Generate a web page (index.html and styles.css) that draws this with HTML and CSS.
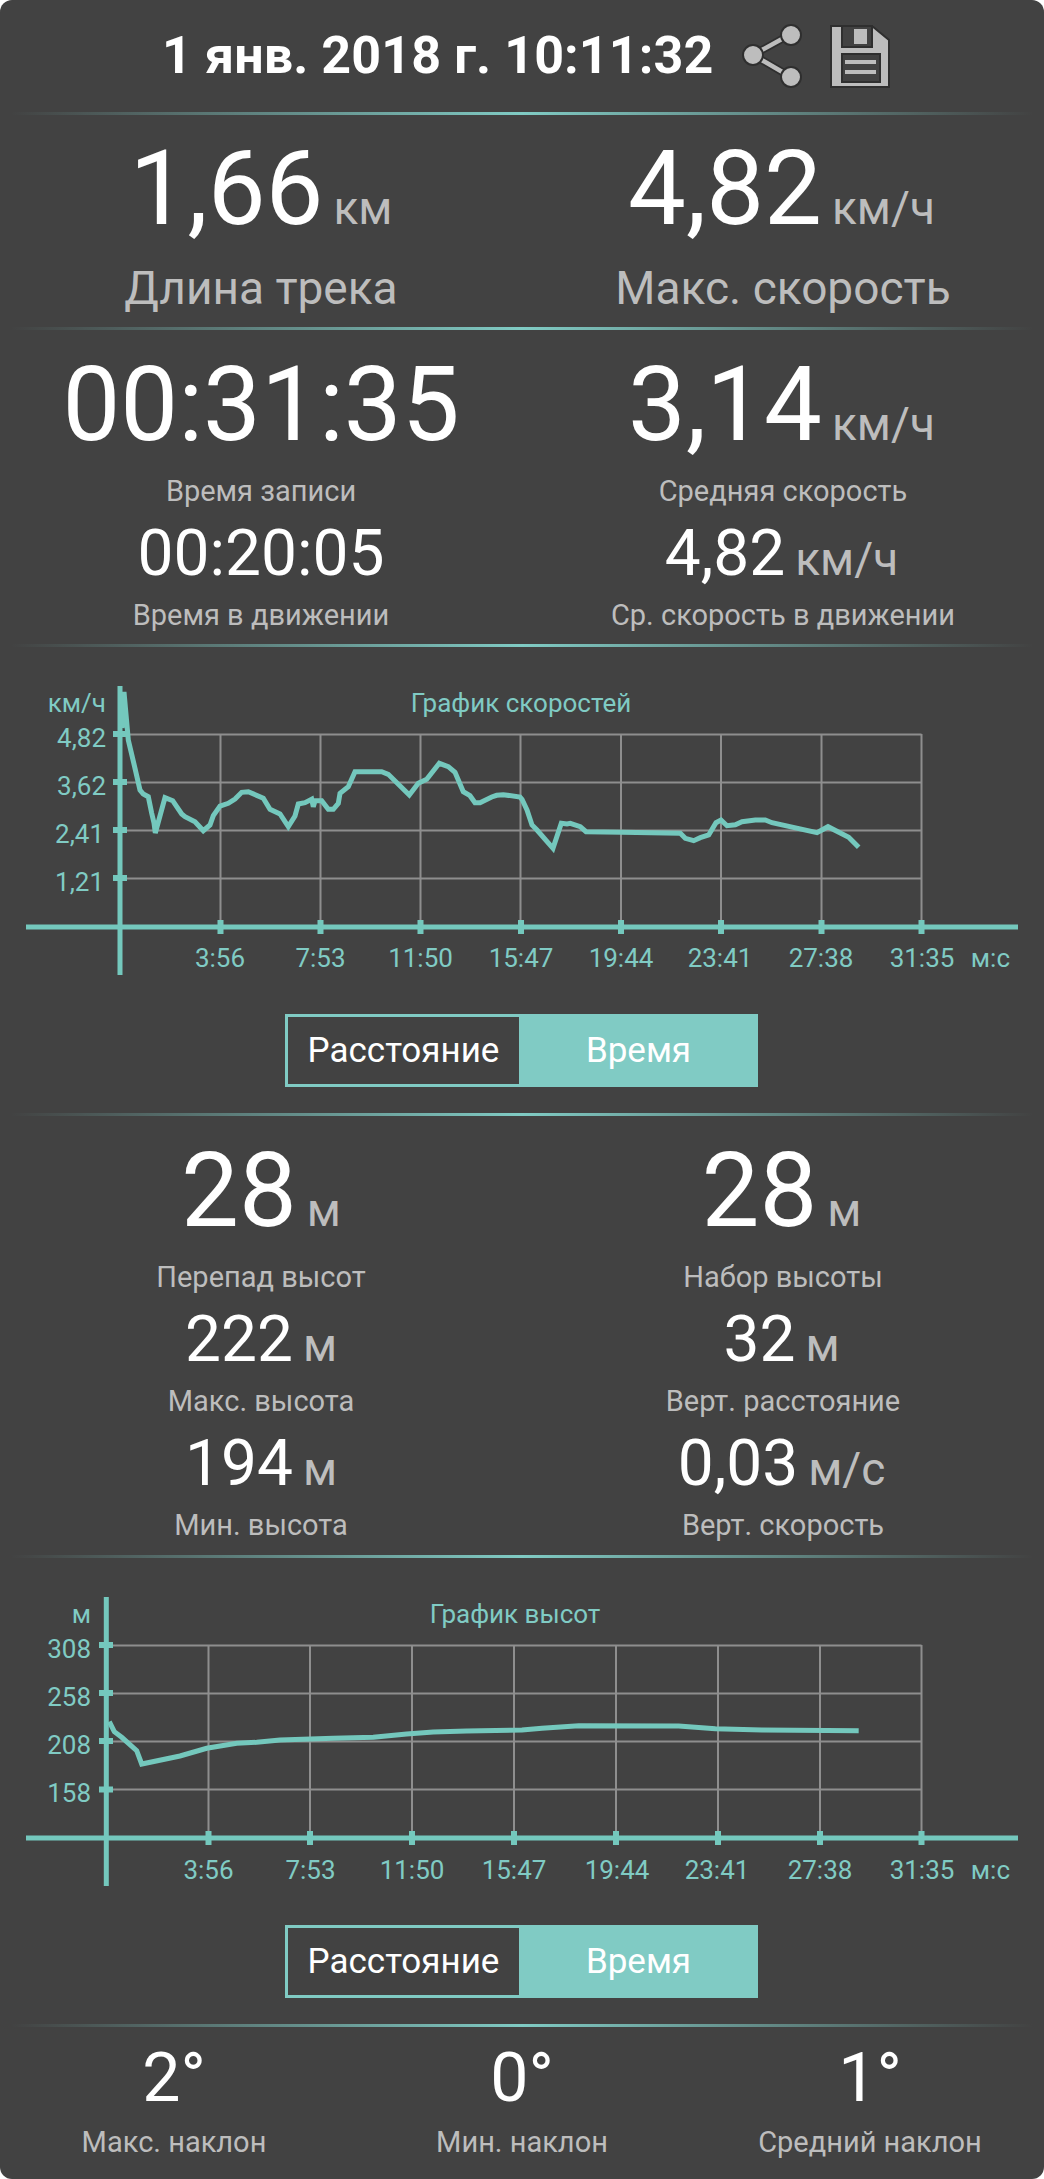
FILE: index.html
```html
<!DOCTYPE html>
<html lang="ru">
<head>
<meta charset="utf-8">
<title>Трек</title>
<link rel="stylesheet" href="styles.css">
</head>
<body>
<main class="screen">
  <header class="head">
    <h1 class="title">1 янв. 2018 г. 10:11:32</h1>
    <svg class="icon share" viewBox="0 0 60 64" aria-hidden="true">
      <path class="share-arm" d="M11 31 L49 10 M11 31 L49 53"/>
      <path class="share-fill" d="M11 31 L49 10 M11 31 L49 53"/>
      <circle cx="11" cy="31" r="10"/><circle cx="49" cy="11" r="10"/><circle cx="49" cy="53" r="10"/>
    </svg>
    <svg class="icon disk" viewBox="0 0 60 63" aria-hidden="true">
      <path class="disk-body" fill-rule="evenodd" d="M1 1 H42 L59 15 V62 H1 Z M12 1 V22 H42 V1 Z"/>
      <rect class="disk-tab" x="24" y="4" width="13" height="15"/>
      <rect class="disk-label" x="12" y="29" width="38" height="28"/>
      <rect class="disk-tab" x="15" y="35" width="31" height="4"/>
      <rect class="disk-tab" x="15" y="45" width="31" height="4"/>
    </svg>
  </header>
  <div class="rule"></div>

  <section class="pair top">
    <div class="stat"><div class="v xl">1,66<span class="u ul">км</span></div><div class="l big">Длина трека</div></div>
    <div class="stat"><div class="v xl">4,82<span class="u ul">км/ч</span></div><div class="l big">Макс. скорость</div></div>
  </section>
  <div class="rule"></div>

  <section class="pair time">
    <div class="stat">
      <div class="v xl">00:31:35</div><div class="l">Время записи</div>
      <div class="v md">00:20:05</div><div class="l">Время в движении</div>
    </div>
    <div class="stat">
      <div class="v xl">3,14<span class="u ul">км/ч</span></div><div class="l">Средняя скорость</div>
      <div class="v md">4,82<span class="u um">км/ч</span></div><div class="l">Ср. скорость в движении</div>
    </div>
  </section>
  <div class="rule"></div>

  <svg class="chart speed" viewBox="0 650 1044 336" aria-label="График скоростей">
    <g class="grid">
      <path d="M120 734.5H921.5M120 782.5H921.5M120 830.5H921.5M120 878.5H921.5"/>
      <path d="M220.5 734V927M320.5 734V927M420.5 734V927M520.5 734V927M621 734V927M721 734V927M821.5 734V927M921.5 734V927"/>
    </g>
    <g class="axis">
      <path d="M120 686V975M26 927H1018"/>
      <path class="tick" d="M113 734H127M113 782H127M113 830H127M113 878H127M220.5 920V934M320.5 920V934M420.5 920V934M521 920V934M621 920V934M721 920V934M821.5 920V934M921.5 920V934"/>
    </g>
    <polyline class="line" points="122,728 124,692 128.3,740 135,768.3 140,790 143.3,794 148.3,796.7 151.7,813.3 154,823 155.3,833 165,797.7 172.7,800.7 181.7,814 185,816.7 195,821.7 203.3,830.7 210,825 213.3,815.7 220,806 228.3,803.3 235,799 241.7,792.3 248.3,791.7 263.3,798.3 270,809.3 280,814 288.3,826.7 295,816 298.3,804 305,802.7 311.7,799.3 313.3,806.7 315,800.7 321.7,800.7 328.3,809.3 333.3,809.3 338.3,803.3 340,793.3 348.3,786.7 355,771.7 381.7,771.7 388.3,774.3 409.3,795 418.3,783.3 426.7,779.3 439.3,763.3 448.3,766.7 455,772.3 463.3,791.7 470,795.7 475,802.7 480,802.7 491.7,797 496.7,795.3 503.3,794.7 520,797 522,799.3 527,810 532,825 537,830 553,848.3 561.3,823.3 567,824 570.3,823.3 580.3,826.7 586,831.7 622,832.3 680.3,833.3 685.3,838.3 693.7,840.7 700.3,837.7 708.7,835 716,822.7 721,820 727,825.7 735.3,824.7 742,821.7 755.3,820 765.3,820 772,822.7 817,832.7 828,826.7 848.7,837.3 858.7,847.3"/>
    <g class="labels">
      <text class="t-end" x="106" y="712">км/ч</text>
      <text class="t-mid" x="521" y="712">График скоростей</text>
      <text class="t-end" x="106" y="747">4,82</text>
      <text class="t-end" x="106" y="795">3,62</text>
      <text class="t-end" x="104" y="843">2,41</text>
      <text class="t-end" x="104" y="891">1,21</text>
      <text class="t-mid" x="220" y="967">3:56</text>
      <text class="t-mid" x="320.500" y="967">7:53</text>
      <text class="t-mid" x="420.500" y="967">11:50</text>
      <text class="t-mid" x="521" y="967">15:47</text>
      <text class="t-mid" x="621" y="967">19:44</text>
      <text class="t-mid" x="720" y="967">23:41</text>
      <text class="t-mid" x="821" y="967">27:38</text>
      <text class="t-mid" x="922" y="967">31:35</text>
      <text class="t-end" x="1010" y="967">м:с</text>
    </g>
  </svg>
  <div class="seg"><span class="seg-off">Расстояние</span><span class="seg-on">Время</span></div>
  <div class="rule"></div>

  <section class="pair alt">
    <div class="stat">
      <div class="v xl">28<span class="u ul">м</span></div><div class="l">Перепад высот</div>
      <div class="v md">222<span class="u um">м</span></div><div class="l">Макс. высота</div>
      <div class="v md">194<span class="u um">м</span></div><div class="l">Мин. высота</div>
    </div>
    <div class="stat">
      <div class="v xl">28<span class="u ul">м</span></div><div class="l">Набор высоты</div>
      <div class="v md">32<span class="u um">м</span></div><div class="l">Верт. расстояние</div>
      <div class="v md">0,03<span class="u um">м/с</span></div><div class="l">Верт. скорость</div>
    </div>
  </section>
  <div class="rule"></div>

  <svg class="chart height" viewBox="0 1560 1044 336" aria-label="График высот">
    <g class="grid">
      <path d="M106 1645.5H921.5M106 1693.5H921.5M106 1741.5H921.5M106 1789.5H921.5"/>
      <path d="M208.5 1645V1838M310 1645V1838M412 1645V1838M514 1645V1838M616 1645V1838M718 1645V1838M820 1645V1838M921.5 1645V1838"/>
    </g>
    <g class="axis">
      <path d="M106.300 1597V1886M26 1838H1018"/>
      <path class="tick" d="M99 1645H113M99 1693H113M99 1741H113M99 1789.500H113M208.500 1831V1845M310 1831V1845M412 1831V1845M514 1831V1845M616 1831V1845M718 1831V1845M820 1831V1845M921.500 1831V1845"/>
    </g>
    <polyline class="line" points="109.3,1721.7 114.3,1731.7 121.7,1737.3 136.7,1750.7 141.7,1764 180,1756 206.7,1748.3 236.7,1743.3 256.7,1742.3 280,1740 333.3,1738.3 373.3,1737.3 406.7,1734 433.3,1732 466.7,1731 522,1730 542,1728.3 578.7,1725.7 678.7,1726 715.3,1728.7 762,1730 858.7,1730.7"/>
    <g class="labels">
      <text class="t-end" x="91" y="1623">м</text>
      <text class="t-mid" x="515" y="1623">График высот</text>
      <text class="t-end" x="91" y="1658">308</text>
      <text class="t-end" x="91" y="1706">258</text>
      <text class="t-end" x="91" y="1754">208</text>
      <text class="t-end" x="91" y="1802">158</text>
      <text class="t-mid" x="208.500" y="1879">3:56</text>
      <text class="t-mid" x="310.500" y="1879">7:53</text>
      <text class="t-mid" x="412" y="1879">11:50</text>
      <text class="t-mid" x="514" y="1879">15:47</text>
      <text class="t-mid" x="617" y="1879">19:44</text>
      <text class="t-mid" x="717" y="1879">23:41</text>
      <text class="t-mid" x="820" y="1879">27:38</text>
      <text class="t-mid" x="922" y="1879">31:35</text>
      <text class="t-end" x="1010" y="1879">м:с</text>
    </g>
  </svg>
  <div class="seg"><span class="seg-off">Расстояние</span><span class="seg-on">Время</span></div>
  <div class="rule"></div>

  <section class="triple">
    <div class="stat"><div class="v lg">2°</div><div class="l">Макс. наклон</div></div>
    <div class="stat"><div class="v lg">0°</div><div class="l">Мин. наклон</div></div>
    <div class="stat"><div class="v lg">1°</div><div class="l">Средний наклон</div></div>
  </section>
</main>
</body>
</html>
```
FILE: styles.css
```css
* { box-sizing: border-box; }
html, body { margin: 0; padding: 0; background: #fff; }
.screen {
  width: 1044px;
  height: 2179px;
  background: #424242;
  border-radius: 12px;
  overflow: hidden;
  font-family: Roboto, "Noto Sans", sans-serif;
  color: #fff;
}
.head {
  height: 112px;
  display: flex;
  align-items: center;
  padding-left: 162px;
}
.title { margin: 0 29px 0 0; font-size: 52px; font-weight: 700; line-height: 1; letter-spacing: 0.1px; white-space: nowrap; }
.icon { display: block; flex: none; }
.share { width: 60px; height: 64px; margin-right: 28px; }
.disk { width: 60px; height: 63px; }
.share circle { fill: #bdbdbd; stroke: #2f2f2f; stroke-width: 2px; }
.share-arm { stroke: #2f2f2f; stroke-width: 8px; fill: none; }
.share-fill { stroke: #bdbdbd; stroke-width: 4.500px; fill: none; }
.disk-body { fill: #bdbdbd; stroke: #2f2f2f; stroke-width: 2px; }
.disk-tab { fill: #bdbdbd; }
.disk-label { fill: #424242; stroke: #2f2f2f; stroke-width: 2px; }
.rule {
  height: 3px;
  background: linear-gradient(90deg, rgba(128,203,196,0) 1%, #80cbc4 50%, rgba(128,203,196,0) 99%);
}
.pair { display: grid; grid-template-columns: 522px 522px; }
.pair.top { height: 212px; padding-top: 19px; }
.pair.time { height: 314px; padding-top: 20px; }
.pair.alt { height: 439px; padding-top: 20px; }
.stat { text-align: center; }
.pair .stat + .stat .v { padding-right: 3px; }
.v { font-weight: 400; white-space: nowrap; }
.xl { font-size: 103px; line-height: 110px; }
.md { font-size: 64px; line-height: 72px; margin-top: 9px; }
.lg { font-size: 68px; line-height: 78px; }
.u { color: #bdbdbd; line-height: 0; font-size: 46px; }
.ul { margin-left: 10px; }
.um { margin-left: 10px; }
.l { color: #bdbdbd; font-size: 29px; line-height: 36px; margin-top: 13px; }
.md + .l { margin-top: 7px; }
.l.big { font-size: 46px; line-height: 56px; margin-top: 16px; }
.lg + .l { margin-top: 7px; }
.chart { display: block; width: 1044px; height: 336px; }
.speed { margin-top: 3px; }
.height { margin-top: 2px; }
.grid path { stroke: #8e8e8e; stroke-width: 2px; fill: none; }
.axis path { stroke: #74c8bd; stroke-width: 5px; fill: none; }
.axis .tick { stroke-width: 6px; }
.line { fill: none; stroke: #74c8bd; stroke-width: 5px; stroke-linejoin: miter; }
.labels text { fill: #80cbc4; font-size: 26px; font-family: Roboto, "Noto Sans", sans-serif; }
.t-end { text-anchor: end; }
.t-mid { text-anchor: middle; }
.seg {
  width: 473px;
  height: 73px;
  margin: 28px 0 26px 285px;
  display: grid;
  grid-template-columns: 234px 239px;
  font-size: 35px;
}
.height + .seg { margin-top: 29px; }
.seg span { display: flex; align-items: center; justify-content: center; }
.seg-off { border: 3px solid #80cbc4; border-right: 0; }
.seg-on { background: #80cbc4; }
.triple { display: grid; grid-template-columns: 348px 348px 348px; padding-top: 12px; }
```
